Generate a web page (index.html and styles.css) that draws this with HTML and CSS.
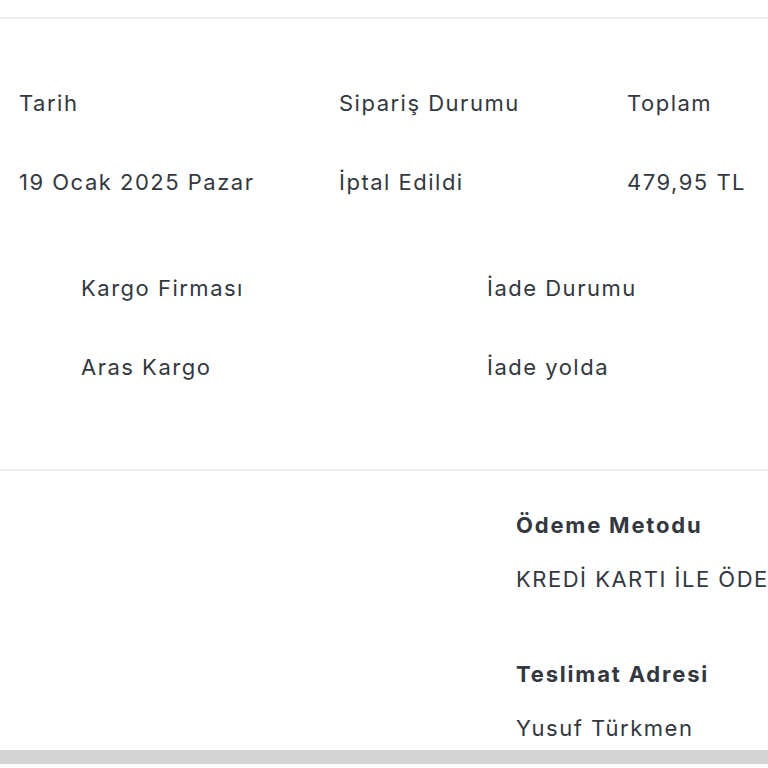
FILE: index.html
```html
<!DOCTYPE html>
<html lang="tr">
<head>
<meta charset="utf-8">
<title>Sipariş Detayı</title>
<link rel="stylesheet" href="styles.css">
</head>
<body>
<div class="page">
  <section class="order">
    <div class="summary">
      <div class="cell"><div class="label">Tarih</div><div class="value">19 Ocak 2025 Pazar</div></div>
      <div class="cell"><div class="label">Sipariş Durumu</div><div class="value">İptal Edildi</div></div>
      <div class="cell"><div class="label">Toplam</div><div class="value">479,95 TL</div></div>
    </div>
    <div class="shipping">
      <div class="cell"><div class="label">Kargo Firması</div><div class="value">Aras Kargo</div></div>
      <div class="cell"><div class="label">İade Durumu</div><div class="value">İade yolda</div></div>
    </div>
  </section>
  <section class="details">
    <div class="info">
      <div class="block">
        <div class="title">Ödeme Metodu</div>
        <div class="text">KREDİ KARTI İLE ÖDEME</div>
      </div>
      <div class="block">
        <div class="title">Teslimat Adresi</div>
        <div class="text">Yusuf Türkmen</div>
      </div>
    </div>
  </section>
  <div class="scrollbar"></div>
</div>
</body>
</html>
```

FILE: styles.css
```css
html, body {
  margin: 0;
  padding: 0;
  background: #fff;
}
.page {
  width: 768px;
  height: 768px;
  overflow: hidden;
  position: relative;
  font-family: Inter, "Open Sans", sans-serif;
  color: #333840;
  font-size: 22px;
  letter-spacing: 1.5px;
}
.order {
  margin-top: 17px;
  border-top: 2px solid #ececec;
  border-bottom: 2px solid #ececec;
  padding-top: 69px;
  height: 454px;
  box-sizing: border-box;
}
.summary {
  display: grid;
  grid-template-columns: 320px 288px 160px;
  padding-left: 19px;
}
.cell .label,
.cell .value {
  line-height: 30px;
  white-space: nowrap;
}
.cell .value {
  margin-top: 49px;
}
.shipping {
  display: grid;
  grid-template-columns: 406px 280px;
  padding-left: 81px;
  margin-top: 76px;
}
.details {
  padding-top: 39px;
}
.info {
  padding-left: 516px;
  display: flex;
  flex-direction: column;
  gap: 65px;
}
.block {
  display: flex;
  flex-direction: column;
  gap: 24px;
}
.title {
  font-weight: 700;
  letter-spacing: 1.8px;
  line-height: 30px;
  white-space: nowrap;
}
.text {
  line-height: 30px;
  white-space: nowrap;
}
.scrollbar {
  position: absolute;
  left: 0;
  right: 0;
  top: 750px;
  height: 14px;
  background: #d4d4d4;
}
```
